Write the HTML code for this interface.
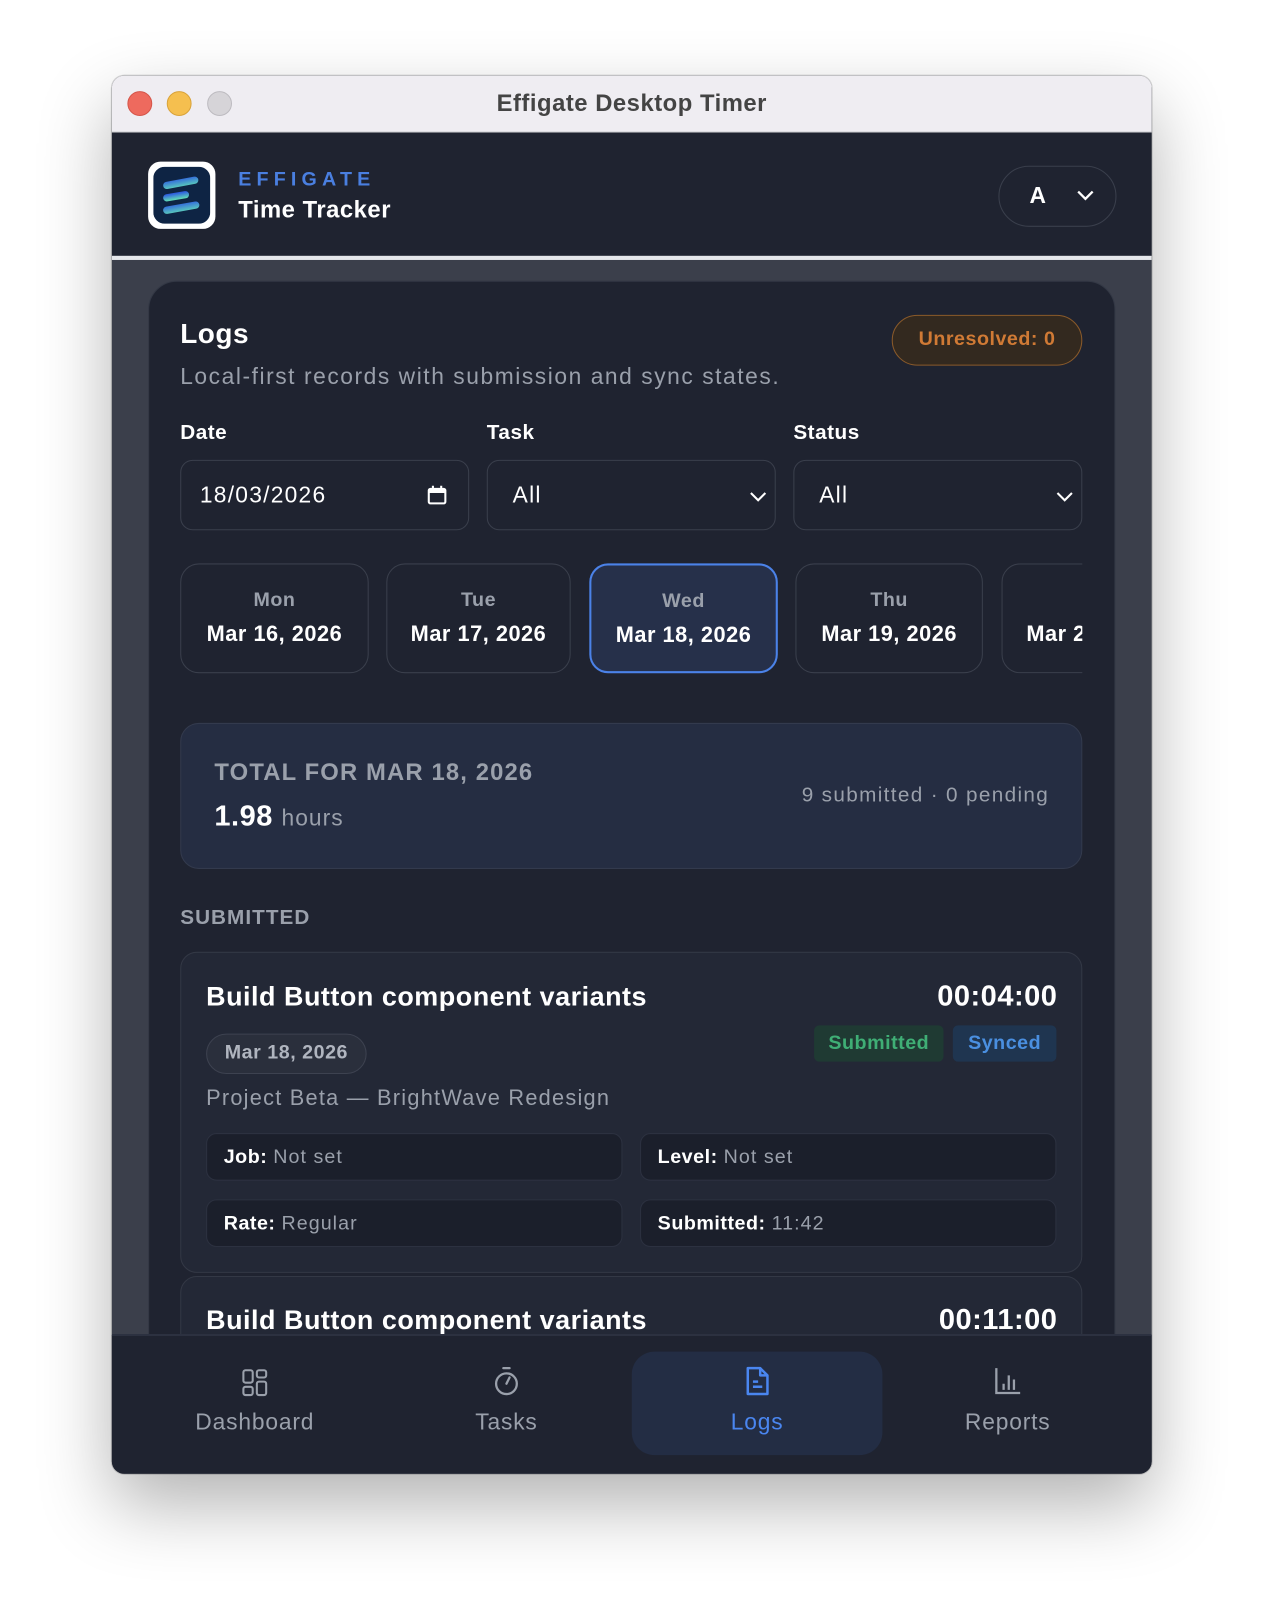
<!DOCTYPE html>
<html><head><meta charset="utf-8"><style>
*{box-sizing:border-box;margin:0;padding:0}
html,body{width:1264px;height:1624px;overflow:hidden;background:#fff}
body{font-family:"Liberation Sans",sans-serif;letter-spacing:.5px}
#s{position:absolute;left:0;top:0;width:1216px;height:1568px;transform:scale(1.0357);transform-origin:0 0}
.a{position:absolute}
.r{letter-spacing:1.3px}
.win{left:108px;top:73px;width:1004px;height:1350px;border-radius:12px;overflow:hidden;background:#3b3f4b;box-shadow:0 30px 70px rgba(0,0,0,.3),0 0 0 1px rgba(0,0,0,.15)}
.t{white-space:nowrap}
.lbl{font-size:20px;font-weight:bold;color:#fff}
.inp{border:1.5px solid #3a3f4c;border-radius:12px;height:68px;top:444px}
.inp span{position:absolute;left:20px;top:20px;font-size:22px;color:#fff;letter-spacing:1.2px}
.day{top:544px;height:106px;border:1.5px solid #3a3f4c;border-radius:18px;text-align:center;overflow:hidden}
.day .n{margin-top:24px;font-size:19px;font-weight:bold;color:#9aa0ab}
.day .d{margin-top:10px;font-size:21px;font-weight:bold;color:#fff;white-space:nowrap}
.f{height:46px;background:#1b1f2b;border:1px solid #2c3140;border-radius:10px;font-size:19px;color:#fff;padding:12px 16px}
.f b{font-weight:bold}.f span{color:#9aa0ab;letter-spacing:1px}
.nv{top:1374px;font-size:22px;color:#9aa0ab;width:242px;text-align:center;margin-top:-14px;letter-spacing:.8px}
</style></head><body><div id="s">
<div class="a win">
 <div class="a" style="left:0;top:0;width:1004px;height:55px;background:#efedf2;border-bottom:1px solid #c8c8cc"></div>
 <div class="a" style="left:15px;top:15px;width:24px;height:24px;border-radius:50%;background:#ee6a5e;border:1px solid #d5554a"></div>
 <div class="a" style="left:53px;top:15px;width:24px;height:24px;border-radius:50%;background:#f5bf4f;border:1px solid #d9a33a"></div>
 <div class="a" style="left:92px;top:15px;width:24px;height:24px;border-radius:50%;background:#d6d4d8;border:1px solid #bdbbc0"></div>
 <div class="a t" style="left:0;width:1004px;text-align:center;top:13px;font-size:23px;font-weight:bold;color:#444">Effigate Desktop Timer</div>
 <div class="a" style="left:0;top:55px;width:1004px;height:119px;background:#1f2330"></div>
 <div class="a" style="left:0;top:174px;width:1004px;height:4px;background:#e5e7eb"></div>
</div>
<div class="a" style="left:143px;top:156px;width:65px;height:65px;background:#fff;border-radius:12px"></div>
<svg class="a" style="left:148px;top:161px" width="55" height="55" viewBox="0 0 55 55"><defs><linearGradient id="g" x1="0" y1="0" x2="1" y2="1"><stop offset="0" stop-color="#2f5fe0"/><stop offset="1" stop-color="#5ed6b8"/></linearGradient></defs><rect width="55" height="55" rx="11" fill="#0e2444"/><g stroke="url(#g)" stroke-width="7" stroke-linecap="round"><line x1="13" y1="18" x2="40" y2="13"/><line x1="13" y1="30" x2="31" y2="27"/><line x1="13" y1="42" x2="41" y2="37"/></g></svg>
<div class="a t" style="left:230px;top:163px;font-size:19px;font-weight:bold;color:#4a7fe0;letter-spacing:5px">EFFIGATE</div>
<div class="a t" style="left:230px;top:189px;font-size:23px;font-weight:bold;color:#fff">Time Tracker</div>
<div class="a" style="left:964px;top:160px;width:114px;height:59px;border:1.5px solid #3a3f4c;border-radius:30px"></div>
<div class="a t" style="left:994px;top:176px;font-size:22px;font-weight:bold;color:#fff">A</div>
<svg class="a" style="left:1039px;top:181px" width="18" height="14"><path d="M2 4l7 7 7-7" stroke="#fff" stroke-width="2.2" fill="none"/></svg>
<div class="a" style="left:143px;top:271px;width:934px;height:1060px;background:#1f2330;border:1.5px solid #333845;border-radius:28px"></div>
<div class="a t" style="left:174px;top:307px;font-size:27px;font-weight:bold;color:#fff">Logs</div>
<div class="a t r" style="left:174px;top:351px;font-size:22px;color:#9aa0ab;letter-spacing:1.5px">Local-first records with submission and sync states.</div>
<div class="a" style="left:861px;top:304px;width:184px;height:49px;border:1.5px solid #8a5a2a;background:#33291f;border-radius:25px;text-align:center;line-height:46px;font-size:19px;font-weight:bold;color:#d07a35">Unresolved: 0</div>
<div class="a lbl" style="left:174px;top:407px">Date</div>
<div class="a lbl" style="left:470px;top:407px">Task</div>
<div class="a lbl" style="left:766px;top:407px">Status</div>
<div class="a inp" style="left:174px;width:279px"><span style="left:18px">18/03/2026</span>
<svg class="a" style="left:237px;top:23px" width="20" height="20" viewBox="0 0 20 20"><rect x="2" y="4" width="16" height="14" rx="1.5" stroke="#fff" stroke-width="2" fill="none"/><rect x="2" y="4" width="16" height="4" fill="#fff"/><line x1="6" y1="1" x2="6" y2="5" stroke="#fff" stroke-width="2"/><line x1="14" y1="1" x2="14" y2="5" stroke="#fff" stroke-width="2"/></svg></div>
<div class="a inp" style="left:470px;width:279px"><span style="left:24px">All</span><svg class="a" style="left:252px;top:27px" width="18" height="14"><path d="M2 4l7 7 7-7" stroke="#fff" stroke-width="2" fill="none"/></svg></div>
<div class="a inp" style="left:766px;width:279px"><span style="left:24px">All</span><svg class="a" style="left:252px;top:27px" width="18" height="14"><path d="M2 4l7 7 7-7" stroke="#fff" stroke-width="2" fill="none"/></svg></div>
<div class="a day" style="left:174px;width:182px"><div class="n">Mon</div><div class="d">Mar 16, 2026</div></div>
<div class="a day" style="left:373px;width:178px"><div class="n">Tue</div><div class="d">Mar 17, 2026</div></div>
<div class="a day" style="left:569px;width:182px;border:2px solid #4b82e8;background:#26304a"><div class="n">Wed</div><div class="d">Mar 18, 2026</div></div>
<div class="a day" style="left:768px;width:181px"><div class="n">Thu</div><div class="d">Mar 19, 2026</div></div>
<div class="a" style="left:967px;top:544px;width:78px;height:106px;overflow:hidden"><div class="a day" style="left:0;top:0;width:182px;text-align:left;padding-left:23px"><div class="n">&nbsp;</div><div class="d">Mar 20, 2026</div></div></div>
<div class="a" style="left:174px;top:698px;width:871px;height:141px;background:#252d42;border:1.5px solid #333a4d;border-radius:18px"></div>
<div class="a t" style="left:207px;top:732px;font-size:23px;font-weight:bold;color:#9aa0ab;letter-spacing:1.1px">TOTAL FOR MAR 18, 2026</div>
<div class="a t" style="left:207px;top:772px;font-size:28px;font-weight:bold;color:#fff">1.98 <span style="font-size:22px;font-weight:normal;color:#9aa0ab;letter-spacing:1px">hours</span></div>
<div class="a t r" style="right:203px;top:757px;font-size:20px;color:#9aa0ab">9 submitted · 0 pending</div>
<div class="a t" style="left:174px;top:875px;font-size:20px;font-weight:bold;color:#9aa0ab;letter-spacing:1px">SUBMITTED</div>
<div class="a" style="left:174px;top:919px;width:871px;height:310px;background:#232836;border:1.5px solid #333845;border-radius:16px"></div>
<div class="a t" style="left:199px;top:947px;font-size:26px;font-weight:bold;color:#fff">Build Button component variants</div>
<div class="a t" style="right:195px;top:946px;font-size:28px;font-weight:bold;color:#fff">00:04:00</div>
<div class="a" style="left:199px;top:998px;width:155px;height:39px;border:1.5px solid #3d4250;background:#2a2f3c;border-radius:20px;text-align:center;line-height:36px;font-size:19px;font-weight:bold;color:#b0b5bf">Mar 18, 2026</div>
<div class="a" style="left:786px;top:990px;width:125px;height:35px;background:#1f3a33;border-radius:5px;text-align:center;line-height:35px;font-size:19px;font-weight:bold;color:#3fae75">Submitted</div>
<div class="a" style="left:920px;top:990px;width:100px;height:35px;background:#1f3550;border-radius:5px;text-align:center;line-height:35px;font-size:19px;font-weight:bold;color:#4a8fe0">Synced</div>
<div class="a t r" style="left:199px;top:1049px;font-size:21px;color:#9aa0ab;letter-spacing:1.2px">Project Beta — BrightWave Redesign</div>
<div class="a f" style="left:199px;top:1094px;width:402px"><b>Job:</b> <span>Not set</span></div>
<div class="a f" style="left:618px;top:1094px;width:402px"><b>Level:</b> <span>Not set</span></div>
<div class="a f" style="left:199px;top:1158px;width:402px"><b>Rate:</b> <span>Regular</span></div>
<div class="a f" style="left:618px;top:1158px;width:402px"><b>Submitted:</b> <span>11:42</span></div>
<div class="a" style="left:174px;top:1232px;width:871px;height:120px;background:#232836;border:1.5px solid #333845;border-radius:16px"></div>
<div class="a t" style="left:199px;top:1259px;font-size:26px;font-weight:bold;color:#fff">Build Button component variants</div>
<div class="a t" style="right:195px;top:1258px;font-size:28px;font-weight:bold;color:#fff">00:11:00</div>
<div class="a" style="left:108px;top:1288px;width:1004px;height:135px;background:#1f2330;border-top:2px solid #2c3140;border-radius:0 0 12px 12px"></div>
<div class="a" style="left:610px;top:1305px;width:242px;height:100px;background:#232d44;border-radius:22px"></div>
<svg class="a" style="left:232px;top:1320px" width="28" height="30" viewBox="0 0 28 30" fill="none" stroke="#9aa0ab" stroke-width="2"><rect x="3" y="3" width="9" height="12" rx="2"/><rect x="16" y="3" width="9" height="7" rx="2"/><rect x="3" y="19" width="9" height="8" rx="2"/><rect x="16" y="14" width="9" height="13" rx="2"/></svg>
<svg class="a" style="left:475px;top:1318px" width="28" height="32" viewBox="0 0 28 32" fill="none" stroke="#9aa0ab" stroke-width="2.2" stroke-linecap="round"><line x1="11" y1="3" x2="17" y2="3"/><circle cx="14" cy="18" r="10"/><line x1="14" y1="18" x2="17" y2="12"/></svg>
<svg class="a" style="left:717px;top:1318px" width="28" height="32" viewBox="0 0 28 32" fill="none" stroke="#4a86f0" stroke-width="2.4" stroke-linejoin="round"><path d="M5 3h12l7 7v18H5z"/><path d="M17 3v7h7"/><line x1="10" y1="16" x2="15" y2="16"/><line x1="10" y1="21" x2="19" y2="21"/></svg>
<svg class="a" style="left:958px;top:1318px" width="30" height="32" viewBox="0 0 30 32" fill="none" stroke="#9aa0ab" stroke-width="2.2"><path d="M4 3v24h23"/><line x1="11" y1="18" x2="11" y2="24"/><line x1="16" y1="10" x2="16" y2="24"/><line x1="21" y1="14" x2="21" y2="24"/></svg>
<div class="a nv" style="left:125px">Dashboard</div>
<div class="a nv" style="left:368px">Tasks</div>
<div class="a nv" style="left:610px;color:#4a86f0">Logs</div>
<div class="a nv" style="left:852px">Reports</div>
</div></body></html>
